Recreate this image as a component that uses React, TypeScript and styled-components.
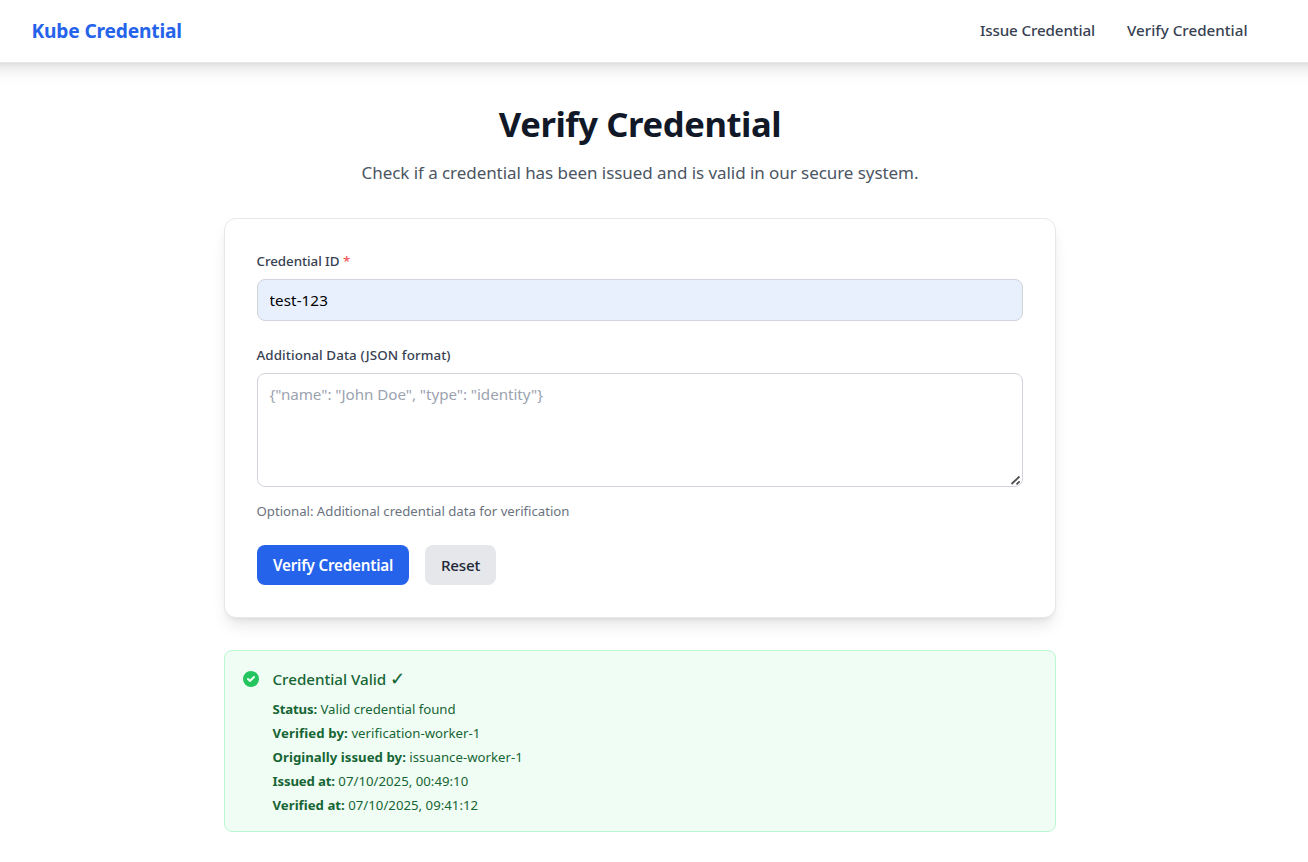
import React from "react";
import styled, { createGlobalStyle } from "styled-components";

const GlobalStyle = createGlobalStyle`
  *, *::before, *::after { box-sizing: border-box; }
  body {
    margin: 0;
    background: #fff;
    color: #111827;
    font-family: "Segoe UI", "Noto Sans", sans-serif;
    font-size: 15.2px;
    line-height: 24px;
  }
  h1, h3, p, ul { margin: 0; padding: 0; }
`;

const Page = styled.div`
  overflow-x: clip;
`;

/* Inline text run with its own tracking. */
const Text = styled.span<{ $track?: number }>`
  letter-spacing: ${({ $track = 0 }) => $track}px;
  white-space: nowrap;
`;

/* Bleeds past both window edges so that the shadow stays even. */
const Header = styled.header`
  margin: 0 -24px;
  padding: 0 24px;
  background: #fff;
  border-bottom: 1px solid #e5e7eb;
  box-shadow: 0 10px 15px -3px rgba(0, 0, 0, 0.1), 0 4px 6px -4px rgba(0, 0, 0, 0.1);
`;

const Nav = styled.nav`
  display: flex;
  align-items: center;
  justify-content: space-between;
  width: 1280px;
  height: 62px;
  padding: 0 32.5px 0 31.5px;
`;

const Brand = styled.a`
  color: #2563eb;
  font-size: 19.2px;
  font-weight: 700;
  line-height: 28px;
`;

const NavLinks = styled.div`
  display: flex;
  gap: 32px;
  padding-bottom: 2px;
`;

const NavLink = styled.a`
  color: #374151;
  font-weight: 500;
`;

const Main = styled.main`
  display: flex;
  flex-direction: column;
  gap: 32px;
  width: 1280px;
  padding: 41px 224px 30px;
`;

const Intro = styled.div`
  display: flex;
  flex-direction: column;
  align-items: center;
  gap: 15px;
  height: 82px;
`;

const Title = styled.h1`
  font-size: 34.6px;
  font-weight: 700;
  line-height: 40px;
`;

const Subtitle = styled.p`
  color: #4b5563;
  font-size: 17px;
  line-height: 28px;
`;

const Card = styled.form`
  display: flex;
  flex-direction: column;
  gap: 24px;
  padding: 32px;
  background: #fff;
  border: 1px solid #e5e7eb;
  border-radius: 12px;
  box-shadow: 0 10px 15px -3px rgba(0, 0, 0, 0.1), 0 4px 6px -4px rgba(0, 0, 0, 0.1);
`;

const Field = styled.div`
  display: flex;
  flex-direction: column;
`;

const Label = styled.label`
  margin: 0 0 8px -0.5px;
  color: #374151;
  font-size: 13.4px;
  font-weight: 500;
  line-height: 20px;
`;

const Required = styled.span`
  color: #ef4444;
  font-weight: 400;
`;

const Input = styled.input`
  display: block;
  width: 100%;
  height: 42px;
  padding: 8px 11.5px;
  background: #e8f0fe;
  border: 1px solid #d1d5db;
  border-radius: 8px;
  color: #000;
  font: inherit;
  letter-spacing: 0.08px;
  outline: none;
`;

const TextAreaWrap = styled.div`
  position: relative;
  height: 114px;
`;

const TextArea = styled.textarea`
  display: block;
  width: 100%;
  height: 100%;
  padding: 8px 11.5px;
  background: #fff;
  border: 1px solid #d1d5db;
  border-radius: 8px;
  font: inherit;
  letter-spacing: -0.05px;
  outline: none;
  resize: none;
  &::placeholder { color: #9ca3af; opacity: 1; }
`;

const ResizeGrip = styled.svg`
  position: absolute;
  right: 2px;
  bottom: 1px;
`;

const Help = styled.p`
  margin: 14px 0 0 -0.5px;
  color: #6b7280;
  font-size: 13.2px;
  line-height: 20px;
`;

const Actions = styled.div`
  display: flex;
  gap: 16px;
`;

const Button = styled.button<{ $primary?: boolean }>`
  width: ${({ $primary }) => ($primary ? 152 : 71)}px;
  height: 40px;
  padding: 0;
  border: 0;
  border-radius: 8px;
  background: ${({ $primary }) => ($primary ? "#2563eb" : "#e5e7eb")};
  color: ${({ $primary }) => ($primary ? "#fff" : "#1f2937")};
  font: inherit;
  font-weight: ${({ $primary }) => ($primary ? 600 : 500)};
`;

const Alert = styled.section`
  display: flex;
  gap: 11.5px;
  padding: 16px;
  background: #f0fdf4;
  border: 1px solid #bbf7d0;
  border-radius: 8px;
  color: #166534;
`;

const AlertIcon = styled.svg`
  flex: none;
  width: 20px;
  height: 20px;
  margin-top: 2px;
  fill: #22c55e;
`;

const AlertBody = styled.div`
  display: flex;
  flex-direction: column;
  gap: 8px;
`;

const AlertTitle = styled.h3`
  height: 24px;
  font-size: 15.2px;
  font-weight: 500;
  line-height: 24px;
`;

const Check = styled.span`
  font-family: "DejaVu Sans", sans-serif;
  font-size: 18px;
  font-weight: 400;
  line-height: 1;
  -webkit-text-stroke: 0.2px currentColor;
`;

const Details = styled.ul`
  display: flex;
  flex-direction: column;
  gap: 4px;
  list-style: none;
  font-size: 13.2px;
  line-height: 20px;
`;

const Term = styled(Text)`
  font-weight: 700;
`;

const details = [
  { term: "Status:", termTrack: -0.14, value: "Valid credential found", track: -0.01 },
  { term: "Verified by:", termTrack: 0.12, value: "verification-worker-1", track: 0.01 },
  { term: "Originally issued by:", termTrack: 0.04, value: "issuance-worker-1", track: 0.01 },
  { term: "Issued at:", termTrack: -0.15, value: "07/10/2025, 00:49:10", track: 0.02 },
  { term: "Verified at:", termTrack: 0.02, value: "07/10/2025, 09:41:12", track: 0.02 },
];

export default function App() {
  return (
    <Page>
      <GlobalStyle />
      <Header>
        <Nav>
          <Brand><Text $track={-0.18}>Kube Credential</Text></Brand>
          <NavLinks>
            <NavLink><Text $track={-0.13}>Issue Credential</Text></NavLink>
            <NavLink><Text>Verify Credential</Text></NavLink>
          </NavLinks>
        </Nav>
      </Header>
      <Main>
        <Intro>
          <Title><Text $track={-0.4}>Verify Credential</Text></Title>
          <Subtitle>
            <Text $track={-0.06}>Check if a credential has been issued and is valid in our secure system.</Text>
          </Subtitle>
        </Intro>
        <Card>
          <Field>
            <Label><Text $track={-0.08}>Credential ID</Text> <Required>*</Required></Label>
            <Input defaultValue="test-123" />
          </Field>
          <Field>
            <Label><Text $track={0.07}>Additional Data (JSON format)</Text></Label>
            <TextAreaWrap>
              <TextArea placeholder={'{"name": "John Doe", "type": "identity"}'} />
              <ResizeGrip width="11" height="11" viewBox="0 0 11 11" stroke="#4f4f4f" strokeWidth="1.8">
                <path d="M1.5 9 9.5 1.5M6.5 9.3 9.7 6.4" />
              </ResizeGrip>
            </TextAreaWrap>
            <Help><Text $track={-0.01}>Optional: Additional credential data for verification</Text></Help>
          </Field>
          <Actions>
            <Button type="button" $primary><Text $track={-0.2}>Verify Credential</Text></Button>
            <Button type="button"><Text $track={-0.2}>Reset</Text></Button>
          </Actions>
        </Card>
        <Alert>
          <AlertIcon viewBox="0 0 20 20">
            <path
              fillRule="evenodd"
              clipRule="evenodd"
              d="M10 18a8 8 0 100-16 8 8 0 000 16zm3.707-9.293a1 1 0 00-1.414-1.414L9 10.586 7.707 9.293a1 1 0 00-1.414 1.414l2 2a1 1 0 001.414 0l4-4z"
            />
          </AlertIcon>
          <AlertBody>
            <AlertTitle><Text $track={-0.03}>Credential Valid</Text> <Check>✓</Check></AlertTitle>
            <Details>
              {details.map((d) => (
                <li key={d.term}>
                  <Term $track={d.termTrack}>{d.term}</Term> <Text $track={d.track}>{d.value}</Text>
                </li>
              ))}
            </Details>
          </AlertBody>
        </Alert>
      </Main>
    </Page>
  );
}
